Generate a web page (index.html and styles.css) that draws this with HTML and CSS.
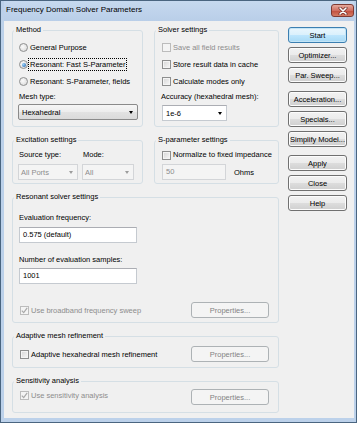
FILE: index.html
```html
<!DOCTYPE html>
<html>
<head>
    <link rel="stylesheet" href="styles.css">
    <title>Frequency Domain Solver Parameters</title>
</head>
<body>
    <div class="window">
        <div class="titlebar">
            <span class="title">Frequency Domain Solver Parameters</span>
            <span class="close-btn">
                <svg width="10" height="8" viewBox="0 0 10 8">
                    <path d="M2 1 L8 7 M8 1 L2 7" stroke="#6b2a25" stroke-width="3" stroke-linecap="round"/>
                    <path d="M2 1 L8 7 M8 1 L2 7" stroke="#ffffff" stroke-width="1.6" stroke-linecap="round"/>
                </svg>
            </span>
        </div>
        <div class="client">
            <div class="groups">
                <fieldset class="group method">
                    <legend>Method</legend>
                    <div class="row"><span class="radio"></span><span>General Purpose</span></div>
                    <div class="row"><span class="radio checked"></span><span class="focus">Resonant: Fast S-Parameter</span></div>
                    <div class="row"><span class="radio"></span><span>Resonant: S-Parameter, fields</span></div>
                    <div class="label">Mesh type:</div>
                    <div class="combo list mesh"><span>Hexahedral</span><span class="arrow"></span></div>
                </fieldset>
                <fieldset class="group solver">
                    <legend>Solver settings</legend>
                    <div class="row disabled"><span class="check"></span><span>Save all field results</span></div>
                    <div class="row"><span class="check"></span><span>Store result data in cache</span></div>
                    <div class="row"><span class="check"></span><span>Calculate modes only</span></div>
                    <div class="label">Accuracy (hexahedral mesh):</div>
                    <div class="combo edit accuracy"><span>1e-6</span><span class="arrow"></span></div>
                </fieldset>

                <fieldset class="group excitation">
                    <legend>Excitation settings</legend>
                    <div class="pair">
                        <div class="label">Source type:</div>
                        <div class="label">Mode:</div>
                        <div class="combo off"><span>All Ports</span><span class="arrow"></span></div>
                        <div class="combo off"><span>All</span><span class="arrow"></span></div>
                    </div>
                </fieldset>
                <fieldset class="group sparam">
                    <legend>S-parameter settings</legend>
                    <div class="label row-check"><span class="check"></span><span>Normalize to fixed impedance</span></div>
                    <div class="ohms">
                        <div class="textbox off imp">50</div>
                        <span>Ohms</span>
                    </div>
                </fieldset>

                <fieldset class="group wide resonant">
                    <legend>Resonant solver settings</legend>
                    <div class="label">Evaluation frequency:</div>
                    <div class="textbox field first">0.575 (default)</div>
                    <div class="label second">Number of evaluation samples:</div>
                    <div class="textbox field">1001</div>
                    <div class="option-row sweep">
                        <div class="row-check disabled"><span class="check ticked"><svg width="7" height="7" viewBox="0 0 7 7"><path d="M0.8 3.6 L2.7 5.6 L6.2 0.8" fill="none" stroke="#a8a8a8" stroke-width="1.2"/></svg></span><span>Use broadband frequency sweep</span></div>
                        <button class="btn off props">Properties...</button>
                    </div>
                </fieldset>

                <fieldset class="group wide adaptive">
                    <legend>Adaptive mesh refinement</legend>
                    <div class="option-row">
                        <div class="row-check"><span class="check"></span><span>Adaptive hexahedral mesh refinement</span></div>
                        <button class="btn off props">Properties...</button>
                    </div>
                </fieldset>

                <fieldset class="group wide sensitivity">
                    <legend>Sensitivity analysis</legend>
                    <div class="option-row">
                        <div class="row-check disabled up"><span class="check ticked"><svg width="7" height="7" viewBox="0 0 7 7"><path d="M0.8 3.6 L2.7 5.6 L6.2 0.8" fill="none" stroke="#a8a8a8" stroke-width="1.2"/></svg></span><span>Use sensitivity analysis</span></div>
                        <button class="btn off props">Properties...</button>
                    </div>
                </fieldset>
            </div>

            <div class="buttons">
                <div class="btn-group">
                    <button class="btn default">Start</button>
                    <button class="btn">Optimizer...</button>
                    <button class="btn">Par. Sweep...</button>
                </div>
                <div class="btn-group">
                    <button class="btn">Acceleration...</button>
                    <button class="btn">Specials...</button>
                    <button class="btn">Simplify Model...</button>
                </div>
                <div class="btn-group">
                    <button class="btn">Apply</button>
                    <button class="btn">Close</button>
                    <button class="btn">Help</button>
                </div>
            </div>
        </div>
    </div>
</body>
</html>
```

FILE: styles.css
```css
body {
    margin: 0;
    font-family: "Liberation Sans", Arial, sans-serif;
    font-size: 7.5px;
    color: #000;
}
.window {
    width: 357px;
    height: 423px;
    box-sizing: border-box;
    border: 1px solid #4a6580;
    background-color: #bcd1ea;
    padding: 0 2px 4px 3px;
    display: flex;
    flex-direction: column;
}
.titlebar {
    height: 20px;
    display: flex;
    justify-content: space-between;
    padding-left: 2px;
    background: linear-gradient(#c6d9ef, #b9cee8);
}
.title {
    font-size: 8px;
    line-height: 18px;
}
.close-btn {
    width: 21px;
    height: 11px;
    margin-top: 3px;
    border: 1px solid #7d3a33;
    border-radius: 3px;
    background: linear-gradient(#e6a99d, #cf6f62 50%, #c04c3c 51%, #d47b64);
    display: flex;
    align-items: center;
    justify-content: center;
}
.client {
    flex: 1;
    background-color: #f0f0f0;
    display: flex;
    gap: 9px;
    padding: 4px 0 0 8px;
}
.groups {
    display: grid;
    grid-template-columns: 131px 125px;
    column-gap: 11px;
    row-gap: 8px;
    align-content: start;
}
.group {
    margin: 0;
    min-width: 0;
    padding: 4px 9px 5px 6px;
    border: 1px solid #d5dfe5;
    border-radius: 3px;
}
.group legend {
    padding: 0 2px;
    margin-left: -5px;
    line-height: 10px;
}
.wide {
    grid-column: 1 / -1;
}
.row {
    height: 17px;
    display: flex;
    align-items: center;
    gap: 2px;
    white-space: nowrap;
}
.solver .row {
    margin-left: 1px;
}
.label {
    line-height: 14px;
    height: 14px;
    white-space: nowrap;
}
.disabled {
    color: #8d8d8d;
}
.radio {
    width: 7px;
    height: 7px;
    border: 1px solid #8e8f8f;
    border-radius: 50%;
    background: radial-gradient(circle at 40% 40%, #fbfbfb, #d4d4d4);
    display: flex;
    align-items: center;
    justify-content: center;
    flex: none;
}
.radio.checked::after {
    content: "";
    width: 4px;
    height: 4px;
    border-radius: 50%;
    background: radial-gradient(circle at 35% 35%, #9ad4fa, #1c5aa8);
}
.focus {
    outline: 1px dotted #000;
    padding: 0 1px;
    margin-left: -1px;
    line-height: 11px;
}
.check {
    width: 7px;
    height: 7px;
    border: 1px solid #8e8f8f;
    background: linear-gradient(135deg, #d6d6d6, #f8f8f8);
    box-shadow: inset 0 0 0 1px #f4f4f4;
    flex: none;
    display: flex;
    align-items: center;
    justify-content: center;
}
.disabled .check {
    border-color: #bcbcbc;
    background: #f4f4f4;
    box-shadow: none;
}
.combo {
    height: 14px;
    display: flex;
    align-items: center;
    justify-content: space-between;
    padding: 0 4px 0 3px;
}
.combo .arrow {
    width: 0;
    height: 0;
    border-left: 2.5px solid transparent;
    border-right: 2.5px solid transparent;
    border-top: 3px solid #000;
}
.list {
    border: 1px solid #8a8a8a;
    border-radius: 2px;
    background: linear-gradient(#f6f6f6, #ececec 50%, #e2e2e2 51%, #dadada);
}
.mesh {
    margin-left: -1px;
    width: 111px;
}
.edit {
    border: 1px solid #c5cad0;
    border-top-color: #abadb3;
    background-color: #fff;
}
.accuracy {
    width: 56px;
    margin-left: 1px;
    margin-top: 1px;
}
.off {
    border: 1px solid #d3d5d8;
    background-color: #f4f4f4;
    color: #8d8d8d;
}
.off .arrow {
    border-top-color: #9c9c9c;
}
.pair {
    display: grid;
    grid-template-columns: 59px 51px;
    column-gap: 5px;
    row-gap: 2px;
}
.pair .combo {
    padding-left: 2px;
    margin-left: -1px;
}
.sparam .row-check {
    margin-left: 1px;
}
.row-check {
    display: flex;
    align-items: center;
    gap: 2px;
    white-space: nowrap;
}
.ohms {
    display: flex;
    align-items: center;
    gap: 8px;
    margin-top: 2px;
}
.textbox {
    height: 14px;
    line-height: 14px;
    padding-left: 3px;
    box-sizing: content-box;
}
.imp {
    width: 59px;
    margin-left: 1px;
}
.field {
    width: 113px;
    border: 1px solid #c5cad0;
    border-top-color: #abadb3;
    background-color: #fff;
    margin-top: 1px;
}
.field.first {
    margin-top: 2px;
}
.label.second {
    margin-top: 10px;
}
.option-row {
    display: flex;
    justify-content: space-between;
    align-items: center;
    padding-left: 1px;
}
.sweep {
    margin-top: 18px;
}
.resonant {
    padding-top: 9px;
    padding-bottom: 4px;
}
.excitation, .sparam {
    padding-top: 3px;
    padding-bottom: 3px;
}
.adaptive {
    padding-top: 5px;
    padding-bottom: 5px;
}
.sensitivity {
    padding-top: 3px;
    padding-bottom: 7px;
}
.up {
    margin-top: -3px;
}
.buttons {
    display: flex;
    flex-direction: column;
    gap: 8px;
    margin-top: 2px;
}
.btn-group {
    display: flex;
    flex-direction: column;
    gap: 4px;
}
.btn {
    width: 59px;
    height: 16px;
    margin: 0;
    padding: 0;
    font-family: inherit;
    font-size: 7.5px;
    color: #000;
    border: 1px solid #707070;
    border-radius: 3px;
    background: linear-gradient(#f2f2f2, #ebebeb 50%, #dddddd 51%, #cfcfcf);
    box-shadow: inset 0 0 0 1px #fcfcfc;
    white-space: nowrap;
}
.btn.default {
    border-color: #3c7fb1;
    background: linear-gradient(#eaf6fd, #d9f0fc 50%, #bee6fd 51%, #a7d9f5);
    box-shadow: inset 0 0 0 1px #c4e5f6;
}
.btn.off {
    border-color: #adb2b5;
    background: #f4f4f4;
    box-shadow: none;
    color: #838383;
}
.props {
    width: 78px;
}
```
